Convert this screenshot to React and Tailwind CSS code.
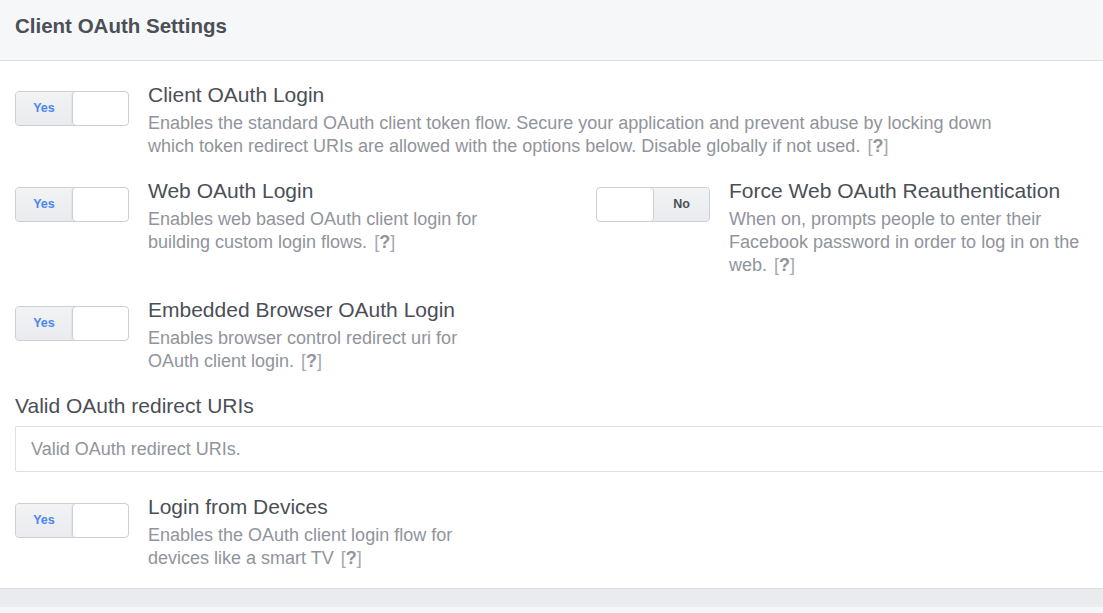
import React from 'react';

const font = { fontFamily: '"Liberation Sans", Arial, Helvetica, sans-serif' };

function Toggle({ on }) {
    return (
        <div className="flex w-[114px] h-[35px] shrink-0 rounded-[4px] border border-[#ccd0d5] overflow-hidden bg-[#eceef1]">
            {on ? (
                <>
                    <div className="w-[56px] flex items-center justify-center text-[12.5px] font-bold text-[#4a86f5] bg-gradient-to-b from-[#f2f3f5] to-[#e9ebee]">
                        Yes
                    </div>
                    <div className="flex-1 bg-white border-l border-[#ccd0d5] rounded-[4px] shadow-[-1px_0_1px_rgba(0,0,0,0.05)]" />
                </>
            ) : (
                <>
                    <div className="w-[57px] bg-white border-r border-[#ccd0d5] rounded-[4px] shadow-[1px_0_1px_rgba(0,0,0,0.05)]" />
                    <div className="flex-1 flex items-center justify-center text-[12.5px] font-bold text-[#4b4f56] bg-gradient-to-b from-[#f2f3f5] to-[#e9ebee]">
                        No
                    </div>
                </>
            )}
        </div>
    );
}

function Help() {
    return (
        <span className="inline-block ml-[7px] text-[#a5a9b0]">
            [<b className="text-[#92959b]">?</b>]
        </span>
    );
}

function Setting({ on = true, title, children, wide }) {
    return (
        <div className="flex items-start">
            <Toggle on={on} />
            <div className={`ml-[19px] -mt-[8px] ${wide ? 'max-w-[880px]' : 'max-w-[362px]'}`}>
                <div className="text-[21px] leading-[24px] text-[#4b4f56] mb-[5px]">{title}</div>
                <div className="text-[18px] leading-[23px] text-[#90949c]">{children}</div>
            </div>
        </div>
    );
}

export default function App() {
    return (
        <div className="w-[1103px] h-[613px] overflow-hidden bg-white" style={font}>
            <div className="h-[61px] bg-[#f6f7f9] border-b border-[#dddfe2] px-[15px] pt-[14px]">
                <h2 className="text-[20.5px] leading-[24px] font-bold text-[#4b4f56]">Client OAuth Settings</h2>
            </div>

            <div className="pl-[15px] pt-[30px] pb-[18px] border-b border-[#dddfe2]">
                <Setting title="Client OAuth Login" wide>
                    Enables the standard OAuth client token flow. Secure your application and prevent abuse by locking down which token redirect URIs are allowed with the options below. Disable globally if not used.
                    <Help />
                </Setting>

                <div className="flex pt-[29px]">
                    <div className="w-[581px] shrink-0">
                        <Setting title="Web OAuth Login">
                            Enables web based OAuth client login for building custom login flows.
                            <Help />
                        </Setting>
                    </div>
                    <div>
                        <Setting on={false} title="Force Web OAuth Reauthentication">
                            When on, prompts people to enter their Facebook password in order to log in on the web.
                            <Help />
                        </Setting>
                    </div>
                </div>

                <div className="pt-[29px]">
                    <Setting title="Embedded Browser OAuth Login">
                        Enables browser control redirect uri for OAuth client login.
                        <Help />
                    </Setting>
                </div>

                <div className="pt-[21px]">
                    <label className="block text-[21px] leading-[24px] text-[#4b4f56]">Valid OAuth redirect URIs</label>
                    <input
                        type="text"
                        placeholder="Valid OAuth redirect URIs."
                        className="mt-[8px] block w-[1110px] h-[46px] border border-[#dddfe2] rounded-[2px] px-[15px] text-[18px] text-[#4b4f56] placeholder-[#90949c] outline-none"
                        style={font}
                    />
                </div>

                <div className="pt-[31px]">
                    <Setting title="Login from Devices">
                        Enables the OAuth client login flow for devices like a smart TV
                        <Help />
                    </Setting>
                </div>
            </div>

            <div className="h-[18px] bg-[#e9ebee]" />
            <div className="h-[10px] bg-[#f5f6f7]" />
        </div>
    );
}
